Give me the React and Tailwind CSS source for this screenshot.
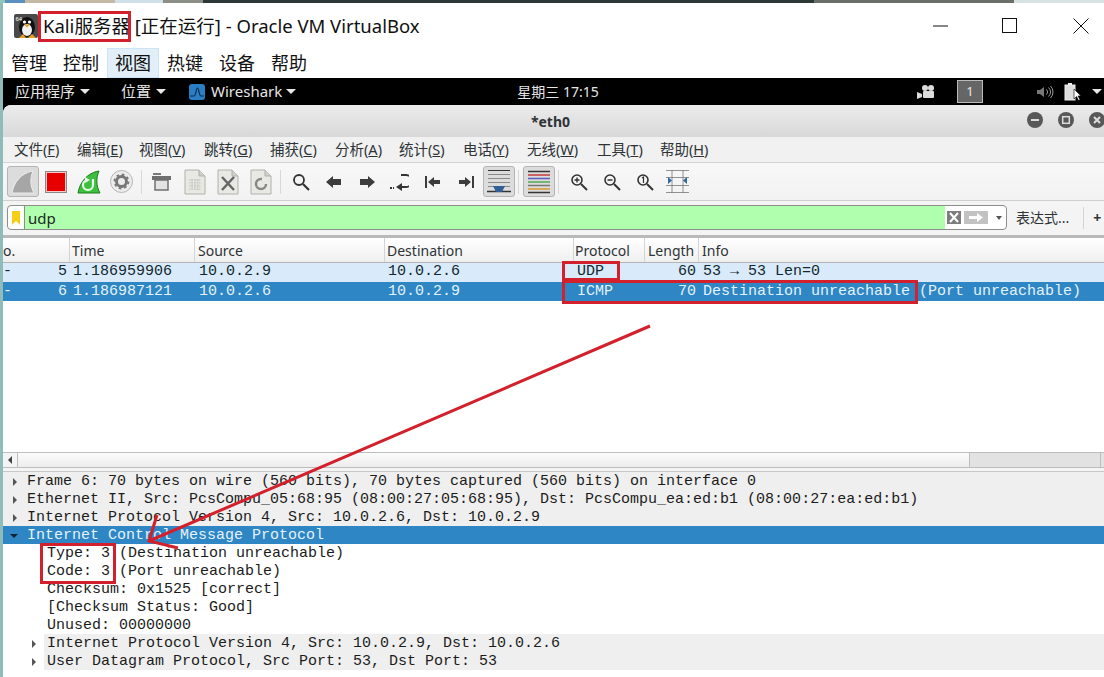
import React from 'react'

const sans = "font-['Noto_Sans','Noto_Sans_CJK_SC',sans-serif]"
const mono = "font-['Liberation_Mono',monospace]"

function Tri({ className = '' }) {
  return <span className={`inline-block w-0 h-0 border-x-[5px] border-x-transparent border-t-[5px] border-t-[#e8e8e8] ${className}`} />
}

function DesktopStrip() {
  return (
    <div className="h-[3px] flex">
      <div className="w-[5px] bg-[#8fc4c0]" />
      <div className="w-[20px] bg-[#5b8fc0]" />
      <div className="w-[90px] bg-[#c4b9a4]" />
      <div className="w-[48px] bg-[#cfe0e8]" />
      <div className="w-[40px] bg-[#8c8f88]" />
      <div className="flex-1 bg-[#2c3836]" />
      <div className="w-[200px] bg-[#6b6f6c]" />
      <div className="w-[90px] bg-[#d8e2e2]" />
    </div>
  )
}

function VmTitleBar() {
  return (
    <div className="h-[45px] bg-white flex items-center">
      <svg width="24" height="24" viewBox="0 0 24 24" className="ml-[11px] mr-[5px]">
        <rect width="24" height="24" rx="2" fill="#4a4a4a" />
        <ellipse cx="13" cy="13" rx="8" ry="10" fill="#111" />
        <ellipse cx="13" cy="16" rx="5" ry="6" fill="#f2f2f2" />
        <circle cx="10.5" cy="8" r="1.6" fill="#fff" />
        <circle cx="15.5" cy="8" r="1.6" fill="#fff" />
        <path d="M10 10.5h6l-3 3z" fill="#e8a020" />
        <path d="M5 24l4-4 3 4zM14 24l4-4 4 4z" fill="#e8a020" />
        <text x="1.5" y="6.5" fontSize="6" fill="#fff" fontFamily="Liberation Sans">64</text>
      </svg>
      <span className={`${sans} text-[18.5px] text-[#111] whitespace-nowrap`}>Kali服务器 [正在运行] - Oracle VM VirtualBox</span>
      <div className="ml-auto flex items-center">
        <svg width="16" height="16" viewBox="0 0 16 16" className="mr-[53px]"><path d="M0 8h15" stroke="#111" /></svg>
        <svg width="16" height="16" viewBox="0 0 16 16" className="mr-[55px]"><rect x=".5" y=".5" width="14" height="14" fill="none" stroke="#111" /></svg>
        <svg width="16" height="16" viewBox="0 0 16 16" className="mr-[15px]"><path d="M.5.5l15 15M15.5.5l-15 15" stroke="#111" /></svg>
      </div>
    </div>
  )
}

function VmMenu() {
  const items = ['管理', '控制', '视图', '热键', '设备', '帮助']
  return (
    <div className={`h-[30px] bg-white flex ${sans} text-[18px] text-[#111]`}>
      {items.map(t => (
        <div key={t} className={`w-[52px] h-full flex items-center justify-center ${t === '视图' ? 'bg-[#e2eff9] border border-[#cde4f7]' : ''}`}>{t}</div>
      ))}
    </div>
  )
}

function GnomeBar() {
  return (
    <div className={`h-[27px] bg-black flex items-center whitespace-nowrap text-[15px] text-[#e6e6e6] ${sans}`}>
      <span className="ml-[12px]">应用程序</span>
      <Tri className="ml-[5px]" />
      <span className="ml-[31px]">位置</span>
      <Tri className="ml-[5px]" />
      <svg width="16" height="16" viewBox="0 0 16 16" className="ml-[23px]">
        <rect width="16" height="16" rx="3" fill="#2a7fc4" />
        <path d="M1 12h4c2 0 2-8 3.500-8S10 12 12 12h3" fill="none" stroke="#0d2f4f" strokeWidth="1.200" />
      </svg>
      <span className="ml-[6px] text-[15px]">Wireshark</span>
      <Tri className="ml-[4px]" />
      <span className="ml-[221px] text-[14px]">星期三 17:15</span>
      <svg width="18" height="16" viewBox="0 0 18 16" className="ml-auto" fill="#ddd">
        <circle cx="8" cy="4" r="3" />
        <circle cx="14" cy="4" r="3" />
        <rect x="6" y="7" width="11" height="7" rx="1" />
        <path d="M0 8l5 2v3l-5 2z" />
      </svg>
      <div className="ml-[22px] w-[26px] h-[23px] bg-[#666] border border-[#bbb] flex items-center justify-center text-[13px]">1</div>
      <svg width="18" height="16" viewBox="0 0 18 16" className="ml-[53px]" fill="none" stroke="#999">
        <path d="M1 6h3l4-3v10l-4-3H1z" fill="#777" stroke="none" />
        <path d="M10.500 5.500a3.500 3.500 0 0 1 0 5M12.500 3.500a6 6 0 0 1 0 9M14.500 2a8.500 8.500 0 0 1 0 12" />
      </svg>
      <svg width="18" height="20" viewBox="0 0 18 20" className="ml-[10px]">
        <rect x="1" y="3" width="10" height="15" fill="#ddd" stroke="#eee" />
        <rect x="4" y="1" width="4" height="2" fill="#eee" />
        <path d="M10 7v10l2.500-2.500 2 4 1.500-.8-2-3.800H17z" fill="#fff" stroke="#000" strokeWidth=".6" />
      </svg>
      <Tri className="ml-[10px] mr-[2px]" />
    </div>
  )
}

function WsTitle() {
  return (
    <div className={`relative h-[32px] rounded-tl-[8px] bg-gradient-to-b from-[#ececec] to-[#d8d8d8] flex items-center justify-center pr-[6px] ${sans} font-bold text-[14px] text-[#2e3436]`}>
      *eth0
      <div className="absolute right-[-1px] top-[7px] flex gap-[15px]">
        {['min', 'max', 'close'].map(k => (
          <svg key={k} width="16" height="16" viewBox="0 0 16 16">
            <circle cx="8" cy="8" r="8" fill="#585858" />
            {k === 'min' && <rect x="4" y="7" width="8" height="2" fill="#ddd" />}
            {k === 'max' && <rect x="4.700" y="4.700" width="6.600" height="6.600" fill="none" stroke="#ddd" strokeWidth="1.500" />}
            {k === 'close' && <path d="M5 5l6 6M11 5l-6 6" stroke="#ddd" strokeWidth="2" />}
          </svg>
        ))}
      </div>
    </div>
  )
}

function WsMenu() {
  const items = [['文件', 'F', 63], ['编辑', 'E', 62], ['视图', 'V', 65], ['跳转', 'G', 66], ['捕获', 'C', 65], ['分析', 'A', 64], ['统计', 'S', 64], ['电话', 'Y', 64], ['无线', 'W', 70], ['工具', 'T', 63], ['帮助', 'H', 60]]
  return (
    <div className={`h-[26px] bg-[#f1f1f1] border-b border-[#d4d4d4] flex items-center pl-[11px] ${sans} text-[14.5px] text-[#2e3436]`}>
      {items.map(([t, k, w]) => (
        <span key={k} style={{ width: w }} className="whitespace-nowrap">{t}(<span className="underline">{k}</span>)</span>
      ))}
    </div>
  )
}

function Cell({ on, children, w = 'w-[33px]' }) {
  return (
    <div className={`${w} h-[32px] flex items-center justify-center`}>
      {on ? <div className="w-[32px] h-[31px] bg-[#dcdcdc] border border-[#b4b4b4] rounded-[3px] flex items-center justify-center">{children}</div> : children}
    </div>
  )
}

const Sep = ({ w }) => <div className={`${w} h-[24px] flex justify-center`}><div className="w-px h-full bg-[#d8d8d8]" /></div>

function Doc({ children }) {
  return (
    <svg width="22" height="26" viewBox="0 0 22 26">
      <path d="M1 1h14l6 6v18H1z" fill="#e9e9e4" stroke="#b0b0ac" />
      <path d="M15 1v6h6" fill="#cfcfcb" stroke="#b0b0ac" />
      {children}
    </svg>
  )
}

function Glass({ sign }) {
  return (
    <svg width="18" height="18" viewBox="0 0 18 18" fill="none" stroke="#333">
      <circle cx="7" cy="7" r="5" strokeWidth="1.600" fill="#f4f4f4" />
      <path d="M11 11l6 6" strokeWidth="2" />
      {sign === '+' && <path d="M4.500 7h5M7 4.500v5" strokeWidth="1.400" />}
      {sign === '-' && <path d="M4.500 7h5" strokeWidth="1.400" />}
      {sign === '1' && <path d="M6 5l1.500-1v6" strokeWidth="1.200" />}
    </svg>
  )
}

function Arrow({ d }) {
  return <svg width="16" height="14" viewBox="0 0 16 14"><path d={d} fill="#3c3c3c" /></svg>
}

function Toolbar() {
  return (
    <div className="h-[38px] bg-gradient-to-b from-[#f8f8f8] to-[#f2f2f2] border-b border-[#cfcfcf] flex items-center pl-[3px]">
      <Cell on>
        <svg width="24" height="24" viewBox="0 0 24 24"><path d="M1 23C3 12 10 3 22 1c-3 7-3 15 1 22z" fill="#a6a6a6" stroke="#ececec" /></svg>
      </Cell>
      <Cell>
        <div className="w-[22px] h-[22px] bg-[#e60000] border border-[#8a8a8a] shadow-[inset_0_0_0_1px_#f6c8c8]" />
      </Cell>
      <Cell>
        <svg width="24" height="24" viewBox="0 0 24 24">
          <path d="M1 23C3 12 10 3 22 1c-3 7-3 15 1 22z" fill="#3fbf3f" stroke="#1c7a1c" />
          <path d="M11 10a5 5 0 1 0 5 5V9" fill="none" stroke="#e8fbe8" strokeWidth="2.200" />
          <path d="M8 7l5 3-5 3z" fill="#e8fbe8" />
        </svg>
      </Cell>
      <Cell>
        <svg width="23" height="23" viewBox="0 0 23 23">
          <circle cx="11.500" cy="11.500" r="11" fill="#ececec" stroke="#b5b5b5" />
          <circle cx="11.500" cy="11.500" r="5" fill="none" stroke="#777" strokeWidth="3" />
          <circle cx="11.500" cy="11.500" r="7" fill="none" stroke="#777" strokeWidth="1.800" strokeDasharray="2.700 2.800" />
        </svg>
      </Cell>
      <Sep w="w-[7px]" />
      <Cell>
        <svg width="19" height="19" viewBox="0 0 19 19">
          <path d="M1 1h8v2H1z" fill="#7b7b7b" />
          <rect x="0" y="4" width="19" height="4" fill="#6f6f6f" />
          <path d="M3 8h13v10H3z" fill="#e3e3e3" stroke="#707070" strokeWidth="1.500" />
        </svg>
      </Cell>
      <Cell>
        <Doc><path d="M5 11h12M5 14h12M5 17h12M5 20h12M8 10v11M11 10v11M14 10v11" stroke="#bbb" strokeDasharray="1.500 1" /></Doc>
      </Cell>
      <Cell>
        <Doc><path d="M5 8l12 13M17 8L5 21" stroke="#666" strokeWidth="2.500" /></Doc>
      </Cell>
      <Cell>
        <Doc><circle cx="11" cy="15" r="5" fill="none" stroke="#888" strokeWidth="2.500" strokeDasharray="24 8" /></Doc>
      </Cell>
      <Sep w="w-[7px]" />
      <Cell>
        <svg width="18" height="18" viewBox="0 0 18 18" fill="none" stroke="#333"><circle cx="7" cy="7" r="5" strokeWidth="1.800" /><path d="M11 11l6 6" strokeWidth="2.200" /></svg>
      </Cell>
      <Cell><Arrow d="M0 7l7-6v3h8v6H7v3z" /></Cell>
      <Cell><Arrow d="M16 7L9 1v3H1v6h8v3z" /></Cell>
      <Cell>
        <svg width="19" height="18" viewBox="0 0 19 18" fill="none">
          <path d="M11 2h5a2 2 0 0 1 0 12h-5" stroke="#333" strokeWidth="1.800" />
          <path d="M6 14l6-4v8z" fill="#333" />
          <path d="M0 15h2M3 15h1" stroke="#333" strokeWidth="2" />
        </svg>
      </Cell>
      <Cell><Arrow d="M0 1h2v12H0zM3 7l6-5v3h6v4H9v3z" /></Cell>
      <Cell><Arrow d="M16 1h-2v12h2zM13 7L7 2v3H1v4h6v3z" /></Cell>
      <Cell on>
        <svg width="26" height="24" viewBox="0 0 26 24">
          <path d="M2 .500h22" stroke="#333" />
          <path d="M2 4.500h22M2 8.500h22M2 12.500h22M2 16.500h22" stroke="#8a8a8a" />
          <path d="M1 21.500h24" stroke="#333" strokeWidth="1.500" />
          <path d="M7 16h12l-3 6h-6z" fill="#2f5f96" />
        </svg>
      </Cell>
      <Sep w="w-[7px]" />
      <Cell on>
        <svg width="24" height="24" viewBox="0 0 24 24" fill="none" strokeWidth="1.300">
          <path d="M1 1.500h22" stroke="#333" />
          <path d="M1 5h22" stroke="#c43a3a" />
          <path d="M1 8.500h22" stroke="#5a5ac0" />
          <path d="M1 12h22" stroke="#55a855" />
          <path d="M1 15.500h22" stroke="#777" />
          <path d="M1 19h22" stroke="#d89a30" />
          <path d="M1 22.500h22" stroke="#333" />
        </svg>
      </Cell>
      <Sep w="w-[7px]" />
      <Cell><Glass sign="+" /></Cell>
      <Cell><Glass sign="-" /></Cell>
      <Cell><Glass sign="1" /></Cell>
      <Cell>
        <svg width="23" height="23" viewBox="0 0 23 23">
          <path d="M0 .500h23M0 7.500h23M0 15.500h23M0 22.500h23M6 0v23M17 0v23" stroke="#777" strokeWidth=".8" />
          <path d="M2 7l4 3.500L2 14zM21 7l-4 3.500 4 3.500z" fill="#2f6aa6" />
        </svg>
      </Cell>
    </div>
  )
}

function FilterBar() {
  return (
    <div className={`h-[37px] bg-[#f4f4f4] border-b-[3px] border-[#b9b9b9] flex items-center pl-[4px] pb-[1px] ${sans} text-[14px] text-[#2e3436]`}>
      <div className="w-[1000px] h-[25px] flex items-stretch bg-white border border-[#8a8f8a] rounded-[4px] overflow-hidden">
        <div className="w-[17px] border-r border-[#8a8f8a] flex items-center justify-center">
          <svg width="8" height="14" viewBox="0 0 8 14"><path d="M0 0h8v14L4 10 0 14z" fill="#f5cf16" /></svg>
        </div>
        <div className="w-[920px] bg-[#afffaf] pl-[3px] pt-[1px] leading-[22px] text-[15px] text-[#1c2a1c]">udp</div>
        <div className="flex items-center pl-[2px]">
          <svg width="14" height="13" viewBox="0 0 14 13"><rect width="14" height="13" fill="#7d7d7d" /><path d="M3 2l8 9M11 2l-8 9" stroke="#fff" strokeWidth="2" /></svg>
          <svg width="24" height="13" viewBox="0 0 24 13" className="ml-[3px]"><rect width="24" height="13" fill="#c2c2c2" /><path d="M5 5h8V2l6 4.500-6 4.500V8H5z" fill="#fff" /></svg>
          <span className="ml-[8px] w-0 h-0 border-x-[3px] border-x-transparent border-t-[4px] border-t-[#555]" />
        </div>
      </div>
      <span className="ml-[9px]">表达式...</span>
      <div className="w-px h-[22px] bg-[#d4d4d4] ml-[14px]" />
      <span className="ml-[9px] font-bold">+</span>
    </div>
  )
}

const columns = [
  ['o.', 'w-[67px]'],
  ['Time', 'w-[125px] pl-[2px]'],
  ['Source', 'w-[190px] pl-[3px]'],
  ['Destination', 'w-[189px] pl-[2px]'],
  ['Protocol', 'w-[71px] pl-[1px]'],
  ['Length', 'w-[54px] pl-[3px]'],
  ['Info', 'flex-1 pl-[3px]'],
]

function PacketHeader() {
  return (
    <div className={`h-[25px] bg-gradient-to-b from-white to-[#efefef] border-b border-[#b4b4b4] flex ${sans} text-[14px] text-[#2e3436]`}>
      {columns.map(([t, c], i) => (
        <div key={t} className={`${c} flex items-center ${i < columns.length - 1 ? 'border-r border-[#d4d4d4]' : ''}`}>{t}</div>
      ))}
    </div>
  )
}

function PacketRow({ no, time, src, dst, proto, len, info, selected }) {
  return (
    <div className={`h-[19px] flex items-center whitespace-pre text-[15px] ${mono} ${selected ? 'bg-[#2e86c5] text-[#e4f2fb] pt-[2px]' : 'bg-[#d9ebfb] text-[#12272e]'}`}>
      <div className="w-[64px] flex justify-between"><span>-</span><span>{no}</span></div>
      <div className="w-[129px] pl-[6px]">{time}</div>
      <div className="w-[189px] pl-[3px]">{src}</div>
      <div className="w-[189px] pl-[3px]">{dst}</div>
      <div className="w-[71px] pl-[3px]">{proto}</div>
      <div className="w-[51px] text-right">{len}</div>
      <div className="flex-1 pl-[7px]">{info}</div>
    </div>
  )
}

function ScrollBar() {
  return (
    <div className="h-[16px] flex border-y border-[#bdbdbd] bg-[#e2e2e2]">
      <div className="w-[15px] border-r border-[#bdbdbd] bg-[#f4f4f4] flex items-center justify-center">
        <span className="w-0 h-0 border-y-[4px] border-y-transparent border-r-[4px] border-r-[#444]" />
      </div>
      <div className="w-[952px] border-r border-[#bdbdbd] bg-gradient-to-b from-[#fbfbfb] to-[#ededed]" />
      <div className="flex-1" />
      <div className="w-[1px] mr-[3px] bg-[#bdbdbd]" />
    </div>
  )
}

function DetailRow({ text, depth = 0, exp, selected, shaded }) {
  return (
    <div className={`h-[18px] pt-[2px] flex items-center whitespace-pre text-[15px] ${mono} ${selected ? 'bg-[#2e86c5] text-[#e4f2fb]' : 'text-[#1c1c1c]'} ${depth ? 'ml-[41px]' : ''} ${shaded ? 'bg-[#efefef]' : ''}`}>
      {exp === 'closed' && <span className={`${depth ? 'ml-[-12px] mr-[8px]' : 'ml-[10px] mr-[10px]'} w-0 h-0 border-y-[4px] border-y-transparent border-l-[4px] border-l-[#555]`} />}
      {exp === 'open' && <span className="ml-[7px] mr-[9px] w-0 h-0 border-x-[4px] border-x-transparent border-t-[4px] border-t-[#123]" />}
      <span className={depth ? 'pl-[3px]' : ''}>{text}</span>
    </div>
  )
}

function Details() {
  return (
    <div className="flex-1 bg-white">
      <div className="bg-[#efefef]">
        <DetailRow exp="closed" text="Frame 6: 70 bytes on wire (560 bits), 70 bytes captured (560 bits) on interface 0" />
        <DetailRow exp="closed" text="Ethernet II, Src: PcsCompu_05:68:95 (08:00:27:05:68:95), Dst: PcsCompu_ea:ed:b1 (08:00:27:ea:ed:b1)" />
        <DetailRow exp="closed" text="Internet Protocol Version 4, Src: 10.0.2.6, Dst: 10.0.2.9" />
      </div>
      <DetailRow exp="open" selected text="Internet Control Message Protocol" />
      <DetailRow depth={1} text="Type: 3 (Destination unreachable)" />
      <DetailRow depth={1} text="Code: 3 (Port unreachable)" />
      <DetailRow depth={1} text="Checksum: 0x1525 [correct]" />
      <DetailRow depth={1} text="[Checksum Status: Good]" />
      <DetailRow depth={1} text="Unused: 00000000" />
      <DetailRow depth={1} shaded exp="closed" text="Internet Protocol Version 4, Src: 10.0.2.9, Dst: 10.0.2.6" />
      <DetailRow depth={1} shaded exp="closed" text="User Datagram Protocol, Src Port: 53, Dst Port: 53" />
    </div>
  )
}

function Annotations() {
  const box = 'absolute border-[3px] border-[#d2202c]'
  return (
    <>
      <div className={`${box} left-[38px] top-[11px] w-[93px] h-[31px]`} />
      <div className={`${box} left-[562px] top-[261px] w-[58px] h-[20px]`} />
      <div className={`${box} left-[562px] top-[280px] w-[356px] h-[24px]`} />
      <div className={`${box} left-[40px] top-[543px] w-[76px] h-[41px]`} />
      <svg width="1104" height="677" className="absolute inset-0 pointer-events-none" fill="none" stroke="#d2202c" strokeWidth="3">
        <path d="M650 326L149 541M157 515L149 541L178 548" />
      </svg>
    </>
  )
}

export default function App() {
  return (
    <div className="relative w-[1104px] h-[677px] overflow-hidden bg-[#8fbcb8]">
      <DesktopStrip />
      <div className="pl-[3px]">
        <VmTitleBar />
        <VmMenu />
        <div className="h-[599px] bg-black flex flex-col">
          <GnomeBar />
          <div className="flex-1 flex flex-col bg-white rounded-tl-[8px] overflow-hidden">
            <WsTitle />
            <WsMenu />
            <Toolbar />
            <FilterBar />
            <PacketHeader />
            <PacketRow no="5" time="1.186959906" src="10.0.2.9" dst="10.0.2.6" proto="UDP" len="60" info="53 → 53 Len=0" />
            <PacketRow selected no="6" time="1.186987121" src="10.0.2.6" dst="10.0.2.9" proto="ICMP" len="70" info="Destination unreachable (Port unreachable)" />
            <div className="h-[151px] bg-white" />
            <ScrollBar />
            <div className="h-[4px] bg-[#f4f4f4] border-b border-[#c8c8c8]" />
            <Details />
          </div>
        </div>
      </div>
      <Annotations />
    </div>
  )
}
